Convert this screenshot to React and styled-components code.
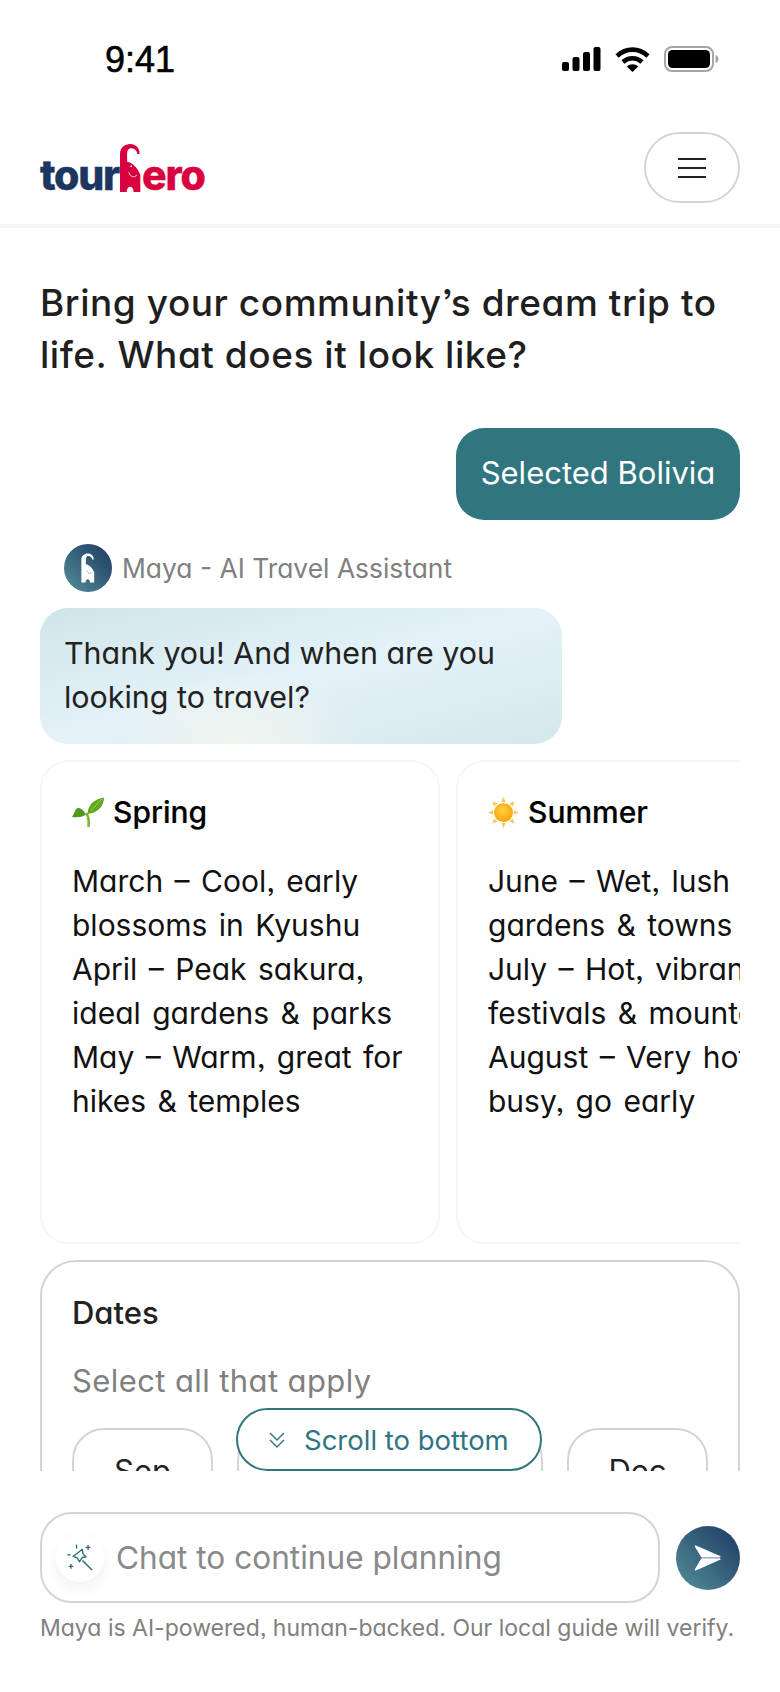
import React from "react";
import styled, { createGlobalStyle } from "styled-components";

const Global = createGlobalStyle`
  html, body { margin: 0; padding: 0; background: #fff; }
  * { box-sizing: border-box; }
  body {
    font-family: Inter, "Noto Sans", sans-serif;
    font-feature-settings: "cv11" 1, "ss03" 1;
  }
`;

const Page = styled.div`
  width: 780px;
  height: 1692px;
  display: flex;
  flex-direction: column;
  overflow: hidden;
  background: #fff;
`;

const StatusBar = styled.div`
  height: 131px;
  flex: none;
  display: flex;
  align-items: flex-start;
  justify-content: space-between;
  padding: 40px 61px 0 105px;
`;
const Time = styled.div`
  font-family: "Liberation Sans", sans-serif;
  font-feature-settings: normal;
  font-size: 36px;
  line-height: 40px;
  font-weight: 400;
  color: #000;
  -webkit-text-stroke: 0.6px #000;
`;
const StatusIcons = styled.div`
  display: flex;
  align-items: center;
  gap: 14px;
  padding-top: 6px;
`;

const Header = styled.header`
  flex: none;
  height: 97px;
  padding: 1px 40px 20px;
  display: flex;
  align-items: flex-start;
  justify-content: space-between;
  border-bottom: 4px solid #f5f5f5;
`;
const Logo = styled.div`
  display: flex;
  align-items: flex-end;
  height: 48px;
  margin-top: 12px;
  font-weight: 800;
  font-feature-settings: normal;
  font-size: 41px;
  line-height: 46px;
  letter-spacing: -1.2px;
  -webkit-text-stroke: 0.4px currentColor;
`;
const LogoWord = styled.span`
  color: ${(p) => p.$color};
  display: block;
  height: 46px;
  margin-bottom: -6px;
`;
const LogoMarkBox = styled.span`
  display: block;
  flex: none;
  margin: 0 1px 0 1px;
  height: 48px;
`;
const LogoSvg = styled.svg`
  display: block;
`;
const MenuButton = styled.button`
  width: 96px;
  height: 71px;
  background: #fff;
  border: 2px solid #d4d4d4;
  border-radius: 36px;
  display: flex;
  flex-direction: column;
  align-items: center;
  justify-content: center;
  gap: 7px;
  padding: 0;
`;
const MenuLine = styled.span`
  width: 28px;
  height: 2px;
  background: #222;
  display: block;
`;

const Chat = styled.main`
  flex: 1;
  min-height: 0;
  position: relative;
  overflow: hidden;
`;
const ChatFlow = styled.div`
  padding: 49px 40px 0;
  display: flex;
  flex-direction: column;
`;
const Heading = styled.h1`
  margin: 0;
  font-size: 37px;
  line-height: 52px;
  font-weight: 500;
  color: #1f1f1f;
  white-space: nowrap;
  letter-spacing: 0.55px;
`;
const UserBubble = styled.div`
  align-self: flex-end;
  margin-top: 47px;
  width: 284px;
  height: 92px;
  border-radius: 28px;
  background: #31757f;
  color: #fff;
  font-size: 31px;
  line-height: 90px;
  text-align: center;
  white-space: nowrap;
`;
const AgentRow = styled.div`
  display: flex;
  align-items: center;
  gap: 10px;
  margin-top: 24px;
  padding-left: 24px;
  height: 48px;
  color: #808080;
  font-size: 26.4px;
`;
const Avatar = styled.div`
  width: 48px;
  height: 48px;
  border-radius: 50%;
  background: linear-gradient(45deg, #538f99 0%, #1c3862 100%);
  display: flex;
  align-items: center;
  justify-content: center;
`;
const AgentBubble = styled.div`
  margin-top: 16px;
  width: 522px;
  height: 136px;
  border-radius: 28px;
  padding: 23px 24px 0;
  font-size: 30.4px;
  line-height: 44px;
  color: #222;
  white-space: nowrap;
  background:
    radial-gradient(ellipse 24% 55% at 38% 100%, #f1f5ee 0%, rgba(241, 245, 238, 0) 100%),
    linear-gradient(to bottom right, #cfe5ea 0%, #e4f2f9 50%, #d4e7ed 100%);
`;
const Carousel = styled.div`
  margin-top: 16px;
  display: flex;
  gap: 16px;
  overflow: hidden;
`;
const SeasonCard = styled.section`
  flex: none;
  width: 400px;
  height: 484px;
  border: 2px solid #f5f5f5;
  border-radius: 28px;
  padding: 30px 30px 0;
  color: #111;
`;
const SeasonTitle = styled.div`
  display: flex;
  align-items: center;
  gap: 9px;
  height: 40px;
  font-size: 30px;
  font-weight: 500;
  color: #000;
  white-space: nowrap;
  -webkit-text-stroke: 0.2px #000;
`;
const SeasonBody = styled.div`
  margin-top: 27px;
  font-size: 30px;
  word-spacing: 3px;
  line-height: 44px;
`;
const SeasonLine = styled.div`
  white-space: nowrap;
`;
const DatesCard = styled.section`
  margin-top: 16px;
  height: 330px;
  border: 2px solid #d4d4d4;
  border-radius: 36px;
  padding: 31px 30px 0;
`;
const DatesTitle = styled.div`
  font-size: 31px;
  line-height: 40px;
  font-weight: 500;
  color: #222;
`;
const DatesHint = styled.div`
  margin-top: 28px;
  font-size: 31px;
  letter-spacing: 0.4px;
  line-height: 40px;
  color: #808080;
`;
const Chips = styled.div`
  margin-top: 27px;
  display: flex;
  gap: 24px;
`;
const Chip = styled.div`
  width: 141px;
  height: 80px;
  border: 2px solid #d4d4d4;
  border-radius: 32px;
  text-align: center;
  font-size: 31px;
  line-height: 76px;
  color: #222;
  padding-top: 3px;
`;
const ScrollButton = styled.button`
  position: absolute;
  left: 236px;
  bottom: 0;
  width: 306px;
  height: 63px;
  background: #fff;
  border: 2px solid #31757f;
  border-radius: 32px;
  color: #2f7580;
  font: inherit;
  font-size: 27.5px;
  display: flex;
  align-items: center;
  gap: 18px;
  padding: 0 0 0 30px;
  white-space: nowrap;
`;

const Composer = styled.footer`
  flex: none;
  height: 221px;
  padding: 41px 40px 0;
  background: #fff;
`;
const ComposerRow = styled.div`
  display: flex;
  align-items: center;
  gap: 16px;
`;
const InputBox = styled.div`
  flex: 1;
  height: 91px;
  border: 2px solid #d4d4d4;
  border-radius: 32px;
  padding-left: 14px;
  display: flex;
  align-items: center;
  gap: 12px;
  font-size: 31.6px;
  color: #8a8a8a;
  white-space: nowrap;
`;
const WandCircle = styled.div`
  width: 48px;
  height: 48px;
  border-radius: 50%;
  background: #fff;
  box-shadow: 0 6px 16px rgba(0, 0, 0, 0.06);
  display: flex;
  align-items: center;
  justify-content: center;
`;
const SendButton = styled.button`
  width: 64px;
  height: 64px;
  flex: none;
  border: 0;
  padding: 0;
  border-radius: 50%;
  background: linear-gradient(45deg, #538f99 0%, #1c3862 100%);
  display: flex;
  align-items: center;
  justify-content: center;
`;
const Disclaimer = styled.p`
  margin: 9px 0 0;
  font-size: 23px;
  line-height: 32px;
  color: #808080;
  white-space: nowrap;
`;

const ELEPHANT =
  "M300 208 L300 100 C300 82 315 72 330 72 C347 72 358 84 358 100 L351 100 C350 90 342 84 332 84 C324 84 321 92 321 102 L321 122 C338 125 352 140 360 160 L360 208 L340 208 C340 198 335 193 330 193 C325 193 320 198 320 208 Z";

const Signal = () => (
  <svg width="39" height="24" viewBox="0 0 39 24" fill="#000">
    <rect x="0" y="15" width="7" height="9" rx="2" />
    <rect x="10.5" y="10" width="7" height="14" rx="2" />
    <rect x="21" y="5" width="7" height="19" rx="2" />
    <rect x="31.5" y="0" width="7" height="24" rx="2" />
  </svg>
);
const Wifi = () => (
  <svg width="35" height="25" viewBox="0 0 35 25" fill="none" stroke="#000" strokeWidth="4.6">
    <path d="M2 9 C11 0.5 24 0.5 33 9" />
    <path d="M8 15 C13.5 10 21.5 10 27 15" />
    <path d="M17.5 25 L11.8 19.5 C15 16.6 20 16.6 23.2 19.5 Z" fill="#000" stroke="none" />
  </svg>
);
const Battery = () => (
  <svg width="55" height="26" viewBox="0 0 55 26">
    <rect x="1" y="1" width="48" height="24" rx="7" fill="none" stroke="#a6a6a6" strokeWidth="2" />
    <rect x="4" y="4" width="42" height="18" rx="4.5" fill="#000" />
    <path d="M51.5 9 C53.5 9.6 54.5 11 54.5 13 C54.5 15 53.5 16.4 51.5 17 Z" fill="#a6a6a6" />
  </svg>
);
const LogoMark = () => (
  <LogoMarkBox>
    <LogoSvg width="21" height="48" viewBox="300 72 62 136" preserveAspectRatio="none">
      <path d={ELEPHANT} fill="#d9003f" />
      <path d="M326 152 C330 166 342 168 350 160" fill="none" stroke="#fff" strokeWidth="2.5" />
      <circle cx="333" cy="135" r="2.5" fill="#fff" />
    </LogoSvg>
  </LogoMarkBox>
);
const AvatarMark = () => (
  <svg width="14" height="30" viewBox="300 70 62 140">
    <path d={ELEPHANT} fill="#fff" />
    <path d="M326 152 C330 166 342 168 350 160" fill="none" stroke="#6a97a6" strokeWidth="3" />
  </svg>
);
const Sprout = () => (
  <svg width="32" height="30" viewBox="0 0 32 30">
    <path d="M16.5 29 C17 24 16.5 20 15 17" fill="none" stroke="#7cb82f" strokeWidth="2.6" strokeLinecap="round" />
    <path d="M15.5 17 C16 7 23 2 32 0.5 C32 9 26 16 15.5 17 Z" fill="#5fa820" />
    <path d="M19 14 C22 10 25 7 30 2" stroke="#9ad14b" strokeWidth="1" fill="none" />
    <path d="M14 17.5 C10 10 5 9.5 3.5 13 C2 16 1 18.5 0 20 C5 20.5 10 20.5 14 17.5 Z" fill="#4f9a1d" />
  </svg>
);
const Sun = () => (
  <svg width="31" height="31" viewBox="0 0 31 31">
    <defs>
      <radialGradient id="sunFill" cx="45%" cy="40%" r="60%">
        <stop offset="0%" stopColor="#ffd23c" />
        <stop offset="100%" stopColor="#f7a40f" />
      </radialGradient>
    </defs>
    <g fill="#fbc64a">
      <path d="M15.5 0 L17.5 5 H13.5 Z" />
      <path d="M15.5 31 L17.5 26 H13.5 Z" />
      <path d="M0 15.5 L5 13.5 V17.5 Z" />
      <path d="M31 15.5 L26 13.5 V17.5 Z" />
      <path d="M4.5 4.5 L9.5 6.2 L6.2 9.5 Z" />
      <path d="M26.5 4.5 L21.5 6.2 L24.8 9.5 Z" />
      <path d="M4.5 26.5 L9.5 24.8 L6.2 21.5 Z" />
      <path d="M26.5 26.5 L21.5 24.8 L24.8 21.5 Z" />
    </g>
    <circle cx="15.5" cy="15.5" r="9.5" fill="url(#sunFill)" />
  </svg>
);
const Chevrons = () => (
  <svg width="18" height="18" viewBox="0 0 18 18" fill="none" stroke="#2f7580" strokeWidth="1.4">
    <path d="M2 2 L9 9 L16 2" />
    <path d="M2 9 L9 16 L16 9" />
  </svg>
);
const Wand = () => (
  <svg width="28" height="28" viewBox="78 72 85 85" fill="none" stroke="#2c6a7c" strokeWidth="4">
    <path d="M127 88 L130 103 L139 111 L127 113 L119 126 L112 114 L99 109 L112 101 Z" strokeLinejoin="round" />
    <path d="M128 122 L157 151" strokeWidth="4.5" />
    <path d="M145 75 V90 M137 82 H152" />
    <path d="M93 133 V147 M86 140 H100" />
    <path d="M110 74 V86" />
    <path d="M82 105 H92" />
  </svg>
);
const Plane = () => (
  <svg width="30" height="28" viewBox="98 100 90 88" fill="#fff" stroke="#fff" strokeWidth="5" strokeLinejoin="round">
    <path d="M104 107 L180 140 L124 140 Z" />
    <path d="M124 147 L180 147 L104 181 Z" />
  </svg>
);

const seasons = [
  {
    name: "Spring",
    icon: <Sprout />,
    lines: [
      "March – Cool, early",
      "blossoms in Kyushu",
      "April – Peak sakura,",
      "ideal gardens & parks",
      "May – Warm, great for",
      "hikes & temples",
    ],
  },
  {
    name: "Summer",
    icon: <Sun />,
    lines: [
      "June – Wet, lush",
      "gardens & towns",
      "July – Hot, vibrant",
      "festivals & mountains",
      "August – Very hot,",
      "busy, go early",
    ],
  },
];

export default function App() {
  return (
    <Page>
      <Global />
      <StatusBar>
        <Time>9:41</Time>
        <StatusIcons>
          <Signal />
          <Wifi />
          <Battery />
        </StatusIcons>
      </StatusBar>
      <Header>
        <Logo>
          <LogoWord $color="#1b3660">tour</LogoWord>
          <LogoMark />
          <LogoWord $color="#d9003f">ero</LogoWord>
        </Logo>
        <MenuButton aria-label="Menu">
          <MenuLine />
          <MenuLine />
          <MenuLine />
        </MenuButton>
      </Header>
      <Chat>
        <ChatFlow>
          <Heading>
            Bring your community’s dream trip to
            <br />
            life. What does it look like?
          </Heading>
          <UserBubble>Selected Bolivia</UserBubble>
          <AgentRow>
            <Avatar>
              <AvatarMark />
            </Avatar>
            Maya - AI Travel Assistant
          </AgentRow>
          <AgentBubble>
            Thank you! And when are you
            <br />
            looking to travel?
          </AgentBubble>
          <Carousel>
            {seasons.map((s) => (
              <SeasonCard key={s.name}>
                <SeasonTitle>
                  {s.icon}
                  {s.name}
                </SeasonTitle>
                <SeasonBody>
                  {s.lines.map((l) => (
                    <SeasonLine key={l}>{l}</SeasonLine>
                  ))}
                </SeasonBody>
              </SeasonCard>
            ))}
          </Carousel>
          <DatesCard>
            <DatesTitle>Dates</DatesTitle>
            <DatesHint>Select all that apply</DatesHint>
            <Chips>
              <Chip>Sep</Chip>
              <Chip>Oct</Chip>
              <Chip>Nov</Chip>
              <Chip>Dec</Chip>
            </Chips>
          </DatesCard>
        </ChatFlow>
        <ScrollButton>
          <Chevrons />
          Scroll to bottom
        </ScrollButton>
      </Chat>
      <Composer>
        <ComposerRow>
          <InputBox>
            <WandCircle>
              <Wand />
            </WandCircle>
            Chat to continue planning
          </InputBox>
          <SendButton aria-label="Send">
            <Plane />
          </SendButton>
        </ComposerRow>
        <Disclaimer>Maya is AI-powered, human-backed. Our local guide will verify.</Disclaimer>
      </Composer>
    </Page>
  );
}
